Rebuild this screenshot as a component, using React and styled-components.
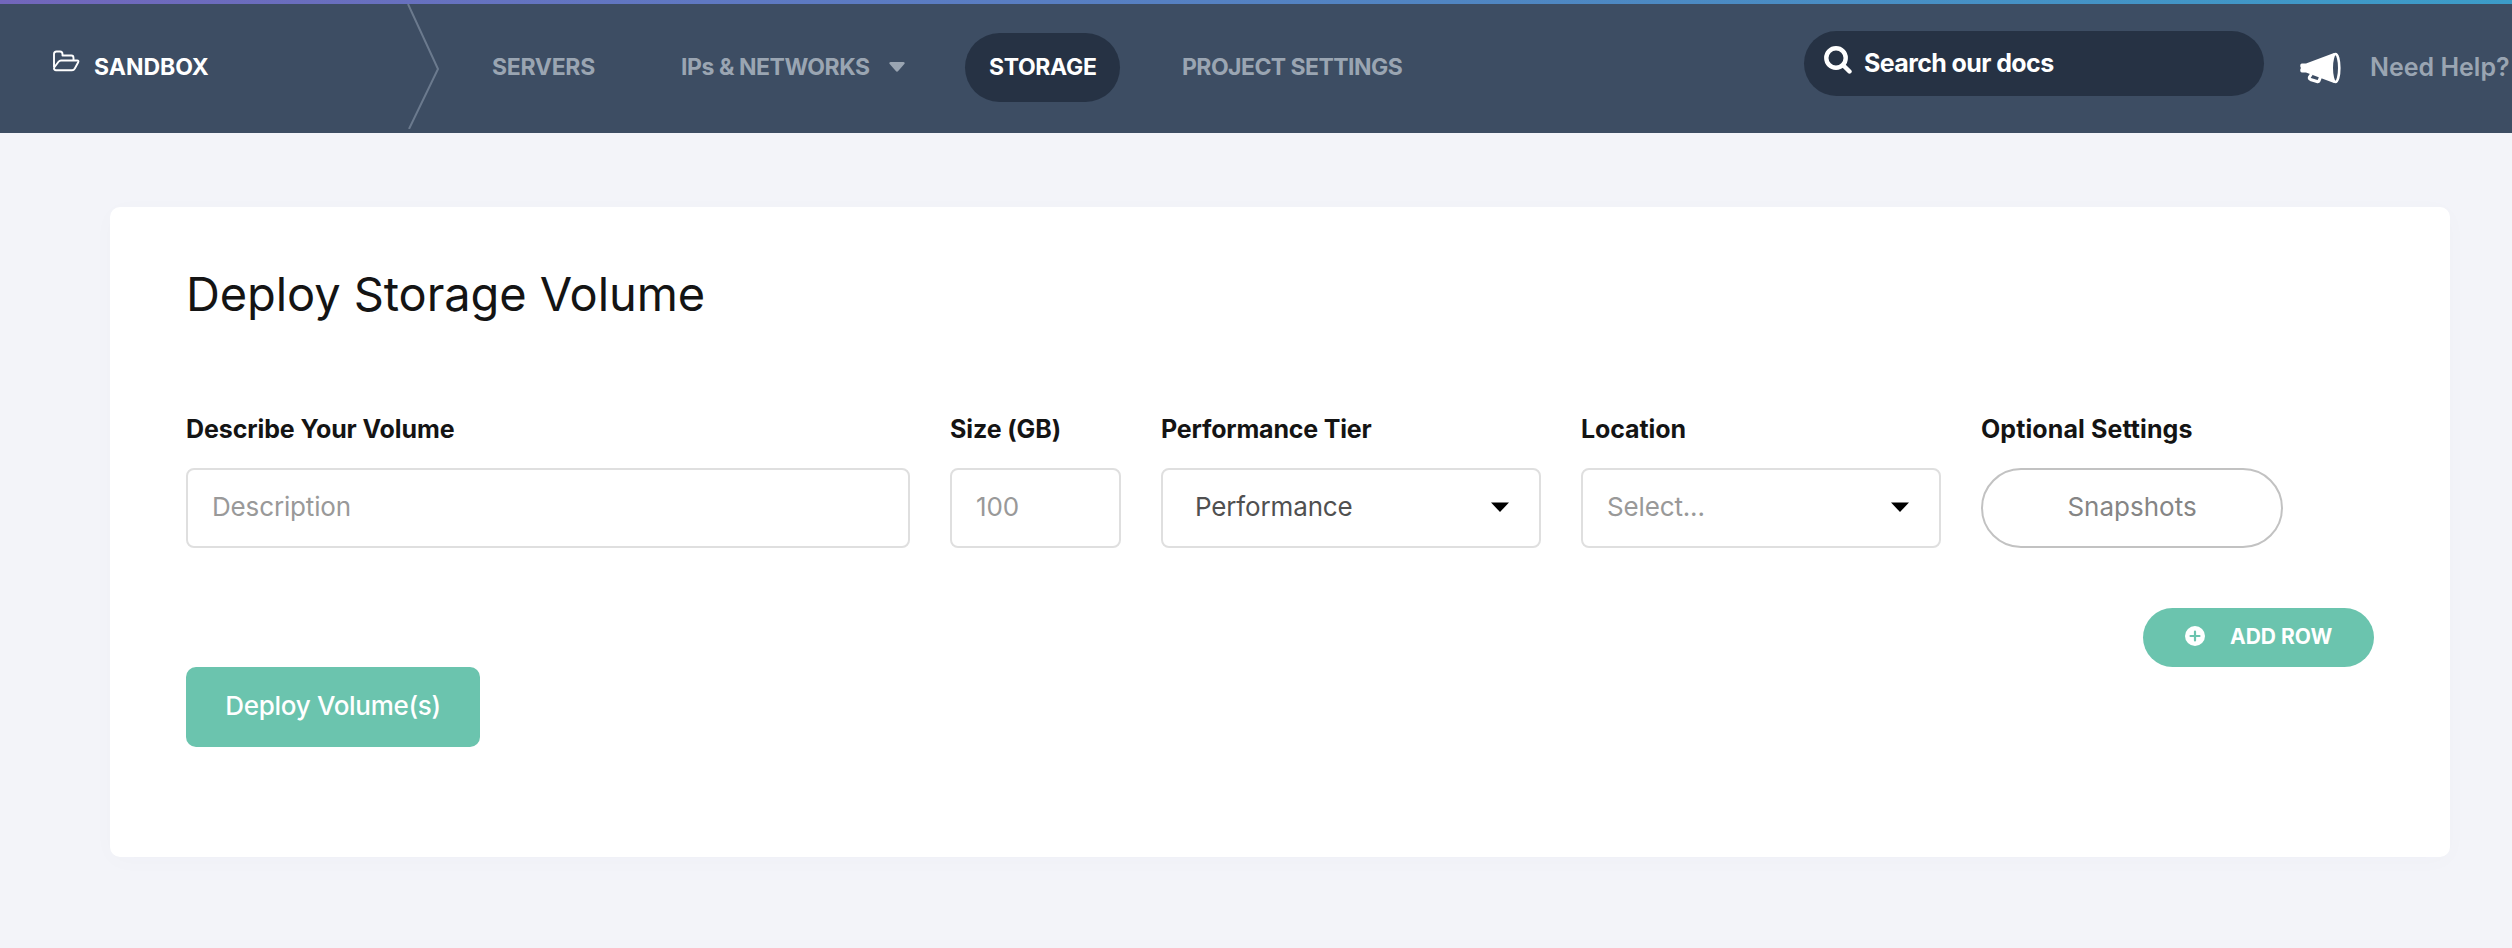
import React from "react";
import styled, { createGlobalStyle } from "styled-components";

const GlobalStyle = createGlobalStyle`
  *, *::before, *::after { box-sizing: border-box; }
  body {
    margin: 0;
    background: #f3f4f9;
    color: #141414;
    font-family: Inter, "Liberation Sans", sans-serif;
    overflow: hidden;
  }
`;

const Page = styled.div`
  display: flex;
  flex-direction: column;
  height: 948px;
`;

const Strip = styled.div`
  height: 4px;
  background: linear-gradient(90deg, #7266bb 0%, #5f78c2 28%, #4f86c2 60%, #3c9cc8 100%);
`;

const Header = styled.header`
  display: flex;
  align-items: flex-start;
  height: 129px;
  background: #3d4d63;
  white-space: nowrap;
`;

const Brand = styled.div`
  display: flex;
  align-items: center;
  width: 407px;
  height: 127px;
  padding: 0 0 1px 52px;
  font-size: 23px;
  font-weight: 700;
  color: #fff;
`;

const FolderIcon = styled.svg`
  width: 28px;
  height: 22px;
  margin: 0 14px 13px 0;
  fill: none;
  stroke: #fff;
  stroke-width: 1.9;
  stroke-linejoin: round;
`;

const Chevron = styled.svg`
  width: 33px;
  height: 125px;
  fill: none;
  stroke: #6b7a8e;
  stroke-width: 2;
`;

const Nav = styled.nav`
  display: flex;
  align-items: center;
  gap: 36px;
  height: 127px;
  margin-left: 28px;
`;

const NavItem = styled.a`
  display: flex;
  align-items: center;
  width: ${(p) => p.$width}px;
  height: 69px;
  padding: 0 0 1px ${(p) => p.$inset || 24}px;
  border-radius: 35px;
  background: ${(p) => (p.$active ? "#263244" : "transparent")};
  color: ${(p) => (p.$active ? "#fff" : "#9aa5b2")};
  font-size: 23px;
  font-weight: 700;
  letter-spacing: ${(p) => p.$tracking || 0}px;
`;

const Caret = styled.svg`
  width: ${(p) => p.$width}px;
  height: 10px;
  fill: currentColor;
`;

const NavCaret = styled(Caret)`
  margin-left: 19px;
`;

const Tools = styled.div`
  display: flex;
  align-items: center;
  height: 127px;
  margin-left: 379px;
`;

const SearchBox = styled.div`
  display: flex;
  align-items: center;
  width: 460px;
  height: 65px;
  margin-bottom: 8px;
  padding: 0 0 1px 20px;
  border-radius: 33px;
  background: #263244;
  color: #fff;
  font-size: 25px;
  font-weight: 650;
  letter-spacing: -0.6px;
`;

const SearchIcon = styled.svg`
  width: 28px;
  height: 28px;
  margin: 0 12px 6px 0;
  fill: none;
  stroke: #fff;
  stroke-width: 4.4;
  stroke-linecap: round;
`;

const Megaphone = styled.svg`
  width: 42px;
  height: 32px;
  margin-left: 35px;
`;

const HelpLink = styled.a`
  margin-left: 29px;
  padding-bottom: 2px;
  font-size: 25px;
  font-weight: 600;
  color: #9aa5b2;
`;

const Card = styled.main`
  display: flex;
  flex-direction: column;
  width: 2340px;
  height: 650px;
  margin: 74px 0 0 110px;
  padding: 57px 76px 0;
  border-radius: 10px;
  background: #fff;
  box-shadow: 0 4px 24px rgba(60, 70, 110, 0.02);
`;

const Title = styled.h1`
  margin: 0 0 90px;
  font-size: 47px;
  line-height: 60px;
  font-weight: 400;
  letter-spacing: -0.1px;
`;

const FieldRow = styled.div`
  display: flex;
  gap: 40px;
`;

const Field = styled.div`
  display: flex;
  flex-direction: column;
  gap: 24px;
  width: ${(p) => p.$width}px;
`;

const Label = styled.label`
  font-size: 25px;
  line-height: 30px;
  font-weight: 700;
  letter-spacing: ${(p) => p.$tracking || -0.1}px;
  white-space: nowrap;
`;

const Control = styled.div`
  display: flex;
  align-items: center;
  justify-content: space-between;
  height: 80px;
  padding: 0 30px 3px ${(p) => p.$inset || 24}px;
  border: 2px solid #dfdfdf;
  border-radius: 8px;
  color: ${(p) => (p.$filled ? "#505050" : "#999")};
  font-size: 26px;
  letter-spacing: -0.15px;
`;

const SelectCaret = styled(Caret)`
  color: #000;
`;

const PillButton = styled.button`
  height: 80px;
  padding: 0 0 3px;
  border: 2px solid #c2c2c2;
  border-radius: 40px;
  background: #fff;
  color: #858585;
  font: 400 26px Inter, sans-serif;
`;

const AddRowButton = styled.button`
  display: flex;
  align-items: center;
  align-self: flex-end;
  width: 231px;
  height: 59px;
  margin-top: 60px;
  padding: 0 0 3px 42px;
  border: 0;
  border-radius: 30px;
  background: #6bc4ae;
  color: #fff;
  font: 700 21px Inter, sans-serif;
`;

const PlusIcon = styled.svg`
  width: 20px;
  height: 20px;
  margin-right: 25px;
`;

const DeployButton = styled.button`
  width: 294px;
  height: 80px;
  padding: 0 0 3px;
  border: 0;
  border-radius: 10px;
  background: #6bc4ae;
  color: #fff;
  font: 500 26px Inter, sans-serif;
  letter-spacing: -0.3px;
`;

const Triangle = () => <path d="M0 0.5H18L9 10Z" />;

export default function App() {
  return (
    <Page>
      <GlobalStyle />
      <Strip />
      <Header>
        <Brand>
          <FolderIcon viewBox="0 0 28 22">
            <path d="M2 17V4Q2 1.5 4.5 1.5H8Q10.500 1.500 10.500 4.200V5.500H19.500Q21.500 5.500 21.500 8V10.500" />
            <path d="M2.200 17.500L6.500 11.800Q7.500 10.500 9 10.500H25.200Q27 10.500 26.200 12.200L22.800 18.500Q21.800 20.200 20 20.200H4Q2 20.200 2 18Z" />
          </FolderIcon>
          SANDBOX
        </Brand>
        <Chevron viewBox="0 0 33 125">
          <path d="M1 0L31 65L2 125" />
        </Chevron>
        <Nav>
          <NavItem $width={152} $tracking={-0.3}>SERVERS</NavItem>
          <NavItem $width={273} $inset={25} $tracking={-0.45}>
            IPs &amp; NETWORKS
            <NavCaret $width={16} viewBox="0 0 16 10">
              <path d="M1.500 0H14.500Q16.500 0.500 15.300 2L9.200 9Q8 10.300 6.800 9L0.700 2Q-0.500 0.500 1.500 0Z" />
            </NavCaret>
          </NavItem>
          <NavItem $width={155} $tracking={-0.35} $active>STORAGE</NavItem>
          <NavItem $width={269} $inset={26} $tracking={-0.55}>PROJECT SETTINGS</NavItem>
        </Nav>
        <Tools>
          <SearchBox>
            <SearchIcon viewBox="0 0 28 28">
              <circle cx="12" cy="12" r="9.700" />
              <path d="M19.200 19.200L25.500 25.500" />
            </SearchIcon>
            Search our docs
          </SearchBox>
          <Megaphone viewBox="0 0 42 32">
            <path d="M3 11.500H7L35 1V31L7 20.500H3Q1 20.500 1.300 17.500L1.900 16L1.300 14.500Q1 11.500 3 11.500Z" fill="#fff" />
            <ellipse cx="36.500" cy="16" rx="3.800" ry="14" fill="#3d4d63" stroke="#fff" strokeWidth="2.600" />
            <path d="M12.500 22L10.500 25Q9.700 26.700 11.500 27.500L18 29.500Q19.500 30 20.200 28.500L21.500 25" fill="none" stroke="#fff" strokeWidth="3" />
          </Megaphone>
          <HelpLink>Need Help?</HelpLink>
        </Tools>
      </Header>

      <Card>
        <Title>Deploy Storage Volume</Title>
        <FieldRow>
          <Field $width={724}>
            <Label>Describe Your Volume</Label>
            <Control>Description</Control>
          </Field>
          <Field $width={171}>
            <Label>Size (GB)</Label>
            <Control>100</Control>
          </Field>
          <Field $width={380}>
            <Label $tracking={-0.2}>Performance Tier</Label>
            <Control $filled $inset={32}>
              Performance
              <SelectCaret $width={18} viewBox="0 0 18 10"><Triangle /></SelectCaret>
            </Control>
          </Field>
          <Field $width={360}>
            <Label>Location</Label>
            <Control>
              Select...
              <SelectCaret $width={18} viewBox="0 0 18 10"><Triangle /></SelectCaret>
            </Control>
          </Field>
          <Field $width={302}>
            <Label $tracking={0.1}>Optional Settings</Label>
            <PillButton>Snapshots</PillButton>
          </Field>
        </FieldRow>
        <AddRowButton>
          <PlusIcon viewBox="0 0 20 20">
            <circle cx="10" cy="10" r="10" fill="#fff" />
            <path d="M10 5.500V14.500M5.500 10H14.500" stroke="#6bc4ae" strokeWidth="2.200" strokeLinecap="round" />
          </PlusIcon>
          ADD ROW
        </AddRowButton>
        <DeployButton>Deploy Volume(s)</DeployButton>
      </Card>
    </Page>
  );
}
